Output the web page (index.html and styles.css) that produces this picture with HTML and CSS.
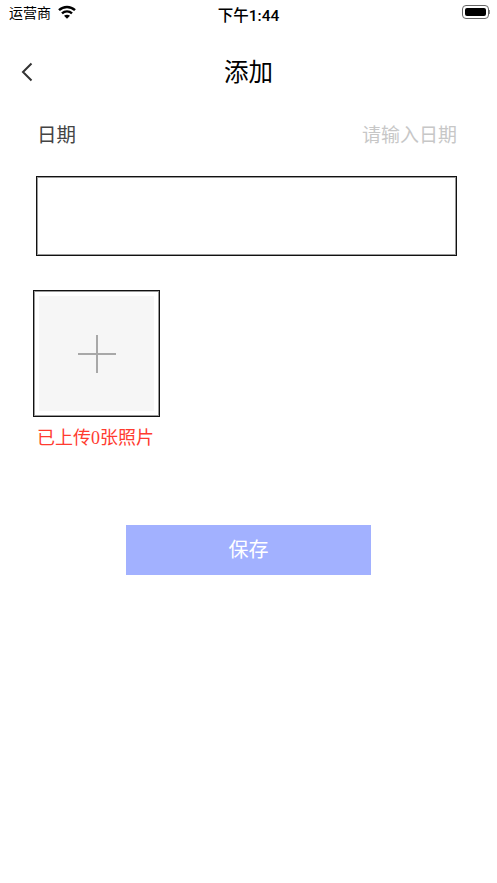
FILE: index.html
```html
<!DOCTYPE html>
<html lang="zh">
<head>
  <meta charset="UTF-8">
  <title>添加</title>
  <link rel="stylesheet" href="styles.css">
</head>
<body>
  <div class="status-bar">
    <div class="status-left">
      <span class="carrier">运营商</span>
      <svg class="wifi" width="18" height="14" viewBox="0 0 18 14">
        <path d="M1 5.200C5.500 .9 12.500 .9 17 5.200" fill="none" stroke="#000" stroke-width="2.400"/>
        <path d="M4 8.300C6.800 5.700 11.200 5.700 14 8.300" fill="none" stroke="#000" stroke-width="2.400"/>
        <path d="M6 10.700C7.700 9.300 10.300 9.300 12 10.700L9 13.800z"/>
      </svg>
    </div>
    <span class="time">下午1:44</span>
    <div class="battery">
      <div class="battery-body"><div class="battery-level"></div></div>
      <div class="battery-tip"></div>
    </div>
  </div>

  <header class="nav">
    <svg class="back" width="14" height="22" viewBox="0 0 14 22">
      <path d="M11.500 2.500L3 11l8.500 8.500" fill="none" stroke="#333" stroke-width="2"/>
    </svg>
    <h1>添加</h1>
  </header>

  <div class="form">
    <div class="date-row">
      <span class="date-label">日期</span>
      <span class="date-input">请输入日期</span>
    </div>
    <div class="note-box"></div>
    <div class="upload-box">
      <div class="upload-inner">
        <div class="plus"></div>
      </div>
    </div>
    <p class="upload-count">已上传0张照片</p>
    <button class="save">保存</button>
  </div>
</body>
</html>
```

FILE: styles.css
```css
* {
  margin: 0;
  padding: 0;
  box-sizing: border-box;
}

body {
  font-family: "Liberation Sans", "Noto Sans CJK SC", sans-serif;
  background: #fff;
  color: #333;
}

.status-bar {
  height: 26px;
  padding: 0 7px 0 9px;
  display: flex;
  align-items: center;
  justify-content: space-between;
  position: relative;
  color: #000;
}

.status-left {
  display: flex;
  align-items: center;
  gap: 7px;
}

.carrier {
  font-size: 14px;
  margin-top: -2px;
}

.wifi {
  display: block;
  margin-top: -2px;
}

.time {
  position: absolute;
  left: 0;
  right: 0;
  top: 3px;
  text-align: center;
  font-family: Roboto, "Noto Sans CJK SC", sans-serif;
  font-size: 15.500px;
  font-weight: 500;
}

.battery {
  display: flex;
  align-items: center;
  margin-top: -2px;
}

.battery-body {
  width: 27px;
  height: 14px;
  border: 1px solid #666;
  border-radius: 4px;
  padding: 2px;
}

.battery-level {
  height: 100%;
  background: #000;
  border-radius: 2px;
}

.battery-tip {
  width: 1px;
  height: 4px;
  background: #888;
}

.nav {
  height: 60px;
  margin-top: 14px;
  position: relative;
  display: flex;
  align-items: center;
  justify-content: center;
}

.nav h1 {
  font-size: 24.500px;
  font-weight: 400;
  color: #000;
}

.back {
  position: absolute;
  left: 20px;
  top: 21px;
}

.form {
  padding: 0 40px 0 36px;
}

.date-row {
  height: 46px;
  padding-left: 1px;
  display: flex;
  align-items: center;
  justify-content: space-between;
  margin-top: 10px;
}

.date-label {
  font-size: 19.500px;
  color: #444;
}

.date-input {
  font-size: 19px;
  color: #c7c7c7;
}

.note-box {
  height: 80px;
  margin-top: 20px;
  border: 1px solid #111;
  box-shadow: inset 0 0 0 1px #999;
}

.upload-box {
  width: 127px;
  height: 127px;
  margin: 34px 0 0 -3px;
  padding: 5px;
  border: 1px solid #111;
  box-shadow: inset 0 0 0 1px #999;
}

.upload-inner {
  height: 100%;
  background: #f6f6f6;
  display: flex;
  align-items: center;
  justify-content: center;
}

.plus {
  width: 38px;
  height: 38px;
  background: linear-gradient(#a8a8a8, #a8a8a8) center / 100% 2px no-repeat,
    linear-gradient(#a8a8a8, #a8a8a8) center / 2px 100% no-repeat;
}

.upload-count {
  margin: 9px 0 0 1px;
  font-family: "Liberation Serif", "Noto Sans CJK SC", sans-serif;
  font-size: 18px;
  line-height: 24px;
  color: #ff3b30;
}

.save {
  display: block;
  width: 245px;
  height: 50px;
  margin: 75px 0 0 90px;
  padding-bottom: 4px;
  border: none;
  background: #a2b1ff;
  color: #fff;
  font-family: inherit;
  font-size: 20px;
}
```
